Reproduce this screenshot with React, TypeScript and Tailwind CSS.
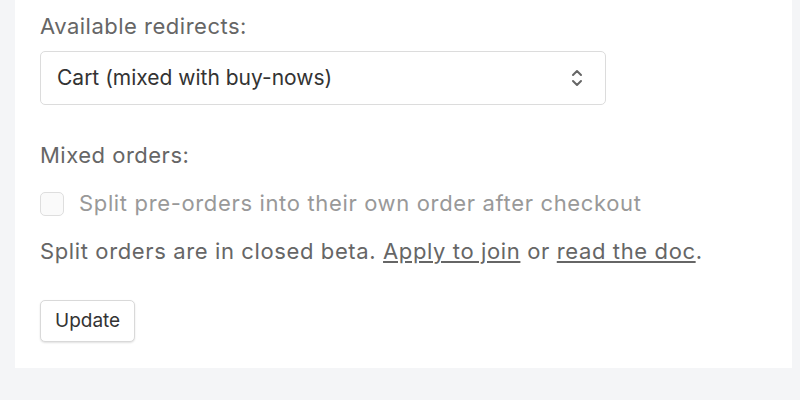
export default function App() {
  return (
    <div
      className="w-[800px] h-[400px] bg-[#f4f5f7] overflow-hidden"
      style={{ fontFamily: 'Inter, "Noto Sans", sans-serif' }}
    >
      <div className="ml-[15px] mr-[8px] h-[368px] bg-white pl-[25px] pr-[25px] pt-[12px]">
        <div className="text-[22px] leading-[28px] tracking-[0.5px] text-[#666]">Available redirects:</div>
        <div className="mt-[11px] w-[566px] h-[54px] rounded-[5px] border border-[#dcdcdc] flex items-center justify-between pl-[16px] pr-[22px]">
          <span className="text-[21px] text-[#333]">Cart (mixed with buy-nows)</span>
          <svg width="12" height="18" viewBox="0 0 12 18" fill="none" stroke="#666" strokeWidth="2" strokeLinecap="round" strokeLinejoin="round">
            <path d="M2 6 L6 2 L10 6" />
            <path d="M2 12 L6 16 L10 12" />
          </svg>
        </div>
        <div className="mt-[36px] text-[22px] leading-[28px] tracking-[0.5px] text-[#666]">Mixed orders:</div>
        <label className="mt-[18px] flex items-center gap-[15px]">
          <span className="w-[24px] h-[24px] rounded-[5px] border border-[#dedede] bg-[#fafafa]" />
          <span className="text-[22px] tracking-[0.65px] text-[#999]">Split pre-orders into their own order after checkout</span>
        </label>
        <p className="mt-[17px] text-[22px] leading-[28px] tracking-[0.62px] text-[#666]">
          Split orders are in closed beta. <a className="underline underline-offset-2">Apply to join</a> or{' '}
          <a className="underline underline-offset-2">read the doc</a>.
        </p>
        <button className="mt-[35px] h-[42px] px-[14px] rounded-[5px] border border-[#d9d9d9] bg-white text-[19px] text-[#333] shadow-[0_1px_2px_rgba(0,0,0,0.12)]">
          Update
        </button>
      </div>
    </div>
  );
}
